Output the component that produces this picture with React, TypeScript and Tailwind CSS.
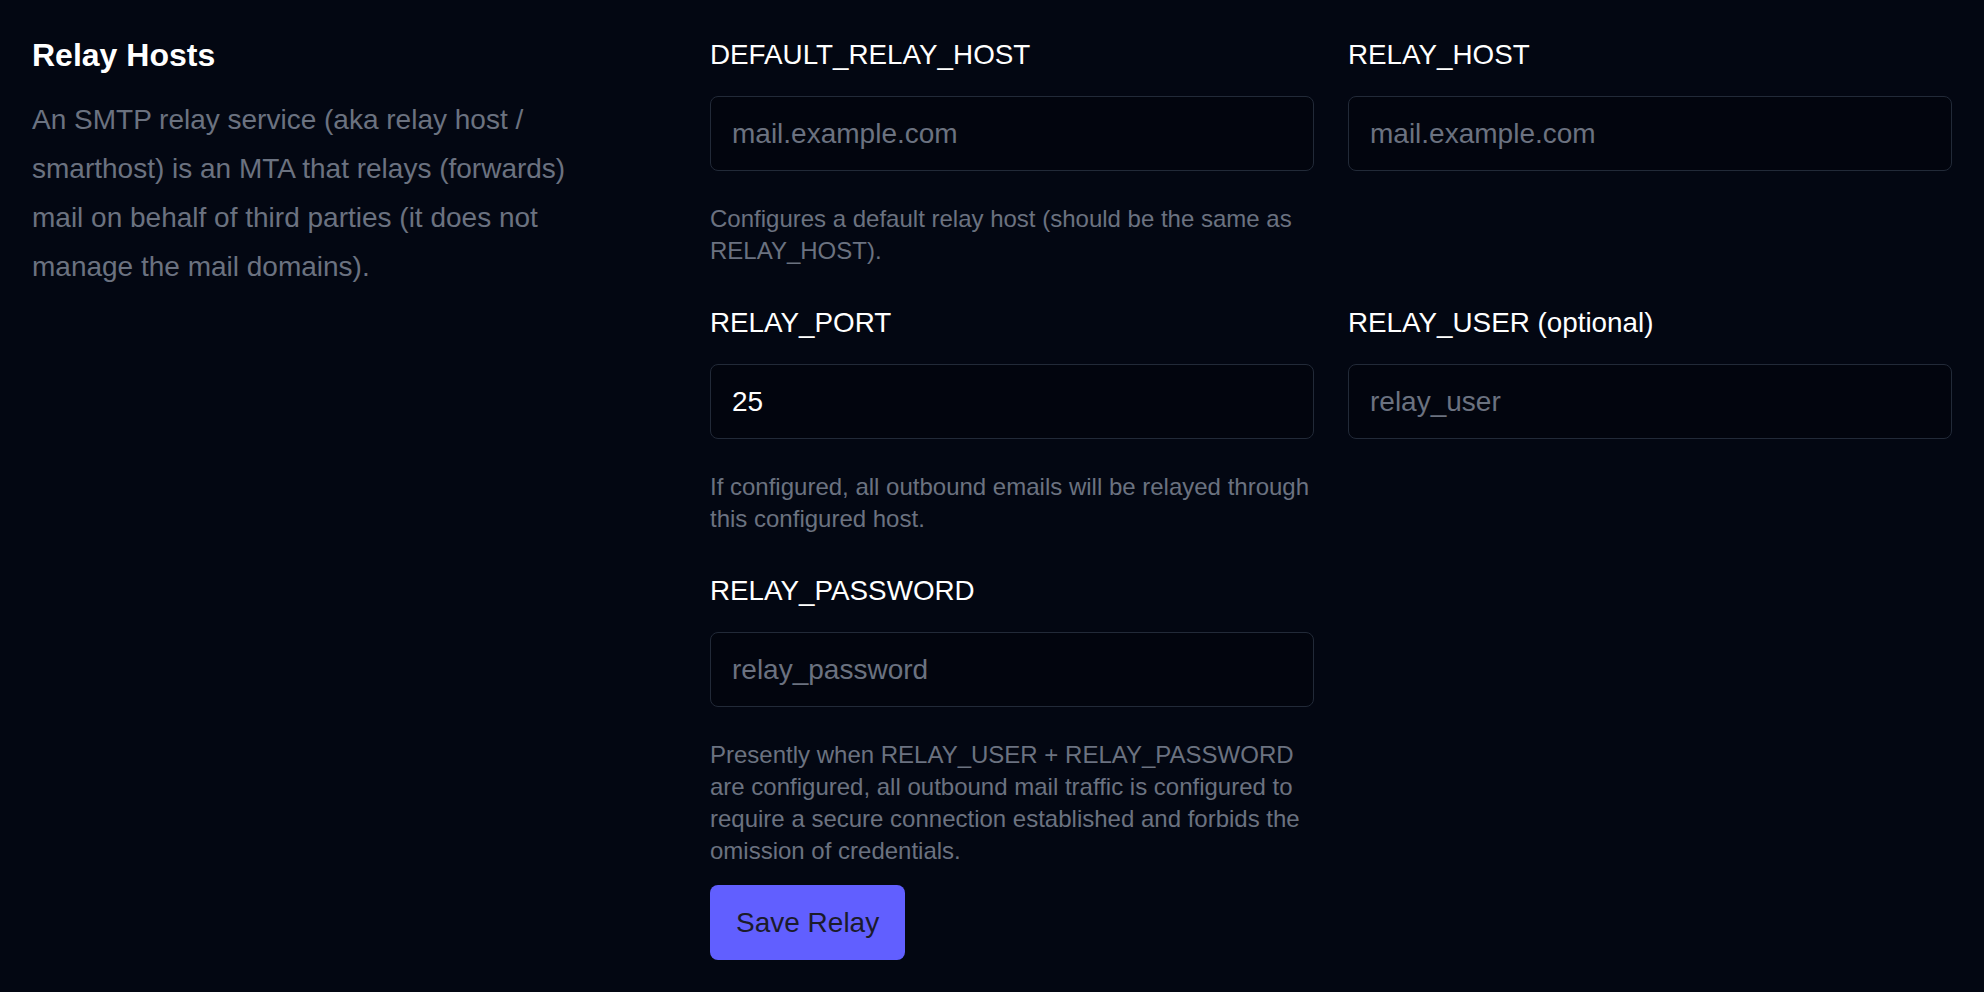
import React from "react";

type FieldProps = {
    label: string;
    placeholder?: string;
    value?: string;
    type?: string;
    help?: string;
};

const Field = ({ label, placeholder, value, type = "text", help }: FieldProps) => {
    return (
        <div className="flex flex-col">
            <label className="text-[27.8px] leading-[46px] text-white">{label}</label>
            <input
                type={type}
                defaultValue={value}
                placeholder={placeholder}
                className="mt-[18px] h-[75px] w-full rounded-lg border-[1.5px] border-[#222a38] bg-[#02050e] px-[21px] text-[28px] text-white placeholder:text-[#6b7280] outline-none"
            />
            {help && (
                <p className="mt-8 text-[24px] leading-8 text-[#6b7280]">{help}</p>
            )}
        </div>
    );
};

export default function App() {
    return (
        <div className="min-h-screen bg-[#030712] font-['Liberation_Sans',Arial,sans-serif]">
            <div className="flex px-8 pt-8 pb-8">
                {/* left: section description */}
                <div className="w-[563px] shrink-0">
                    <h2 className="pt-[3px] text-[32px] font-bold leading-10 text-white">Relay Hosts</h2>
                    <p className="mt-[19.5px] pr-[20px] text-[28px] leading-[49px] text-[#6b7280]">
                        An SMTP relay service (aka relay host / smarthost) is an MTA that relays
                        (forwards) mail on behalf of third parties (it does not manage the mail
                        domains).
                    </p>
                </div>

                {/* right: form */}
                <div className="ml-[115px] flex-1">
                    <div className="grid grid-cols-2 gap-x-[34px] gap-y-[33px]">
                        <Field
                            label="DEFAULT_RELAY_HOST"
                            placeholder="mail.example.com"
                            help="Configures a default relay host (should be the same as RELAY_HOST)."
                        />
                        <Field label="RELAY_HOST" placeholder="mail.example.com" />
                        <Field
                            label="RELAY_PORT"
                            value="25"
                            help="If configured, all outbound emails will be relayed through this configured host."
                        />
                        <Field label="RELAY_USER (optional)" placeholder="relay_user" />
                        <Field
                            label="RELAY_PASSWORD"
                            type="password"
                            placeholder="relay_password"
                            help="Presently when RELAY_USER + RELAY_PASSWORD are configured, all outbound mail traffic is configured to require a secure connection established and forbids the omission of credentials."
                        />
                    </div>
                    <button className="mt-[18px] h-[75px] rounded-lg bg-[#615fff] px-[26px] text-[28px] text-[#1b1b2b]">
                        Save Relay
                    </button>
                </div>
            </div>
        </div>
    );
}
